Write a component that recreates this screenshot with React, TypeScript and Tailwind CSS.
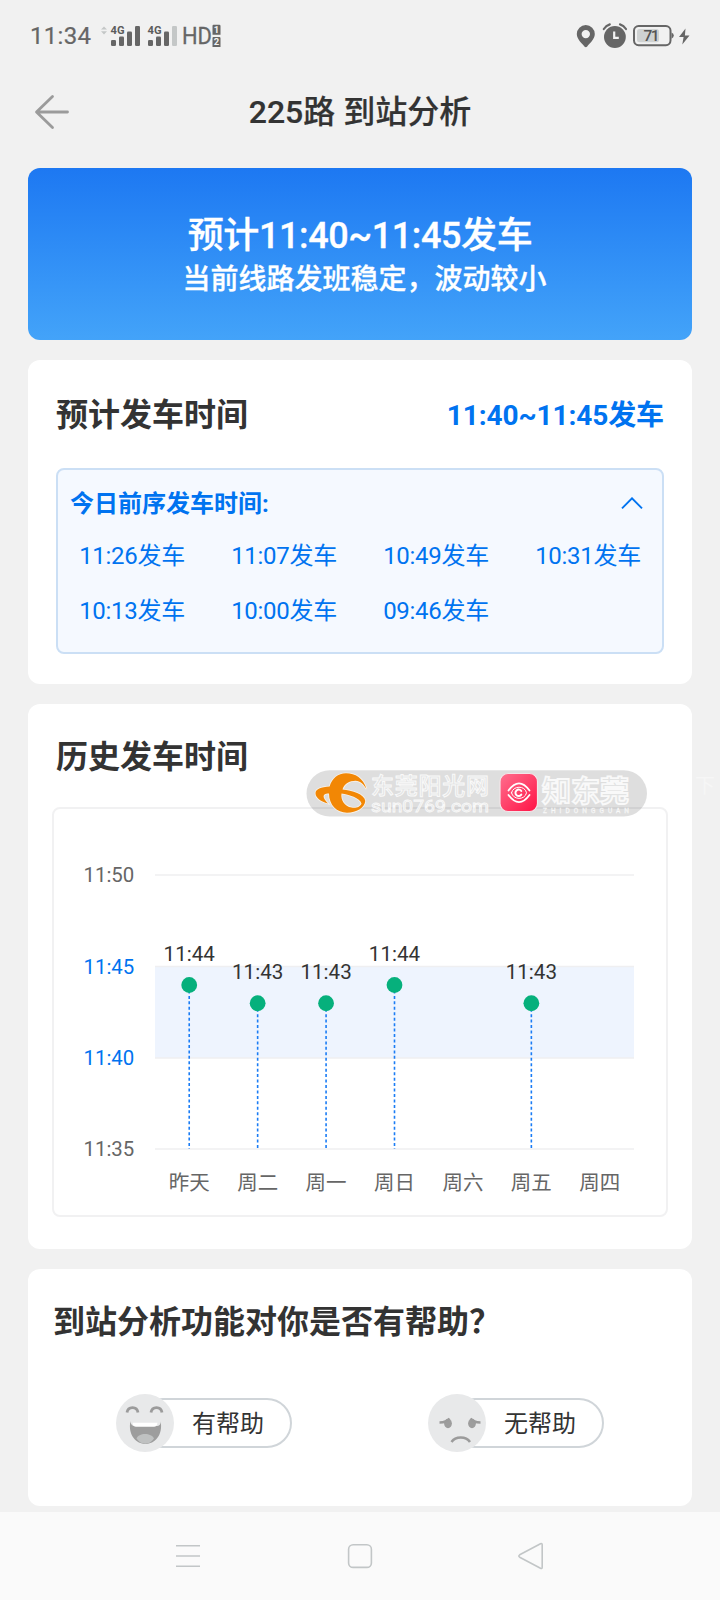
import type { ReactNode } from "react";

const FONT = "font-['Roboto','Noto_Sans_CJK_SC',sans-serif]";

const departures = ["11:26", "11:07", "10:49", "10:31", "10:13", "10:00", "09:46"];

const axis = [
  { label: "11:50", y: 67, active: false },
  { label: "11:45", y: 158.5, active: true },
  { label: "11:40", y: 250, active: true },
  { label: "11:35", y: 341, active: false },
];

const history: { day: string; minute?: number }[] = [
  { day: "昨天", minute: 44 },
  { day: "周二", minute: 43 },
  { day: "周一", minute: 43 },
  { day: "周日", minute: 44 },
  { day: "周六" },
  { day: "周五", minute: 43 },
  { day: "周四" },
];

function SignalBars({ levels }: { levels: number }) {
  const bars = [
    { x: 0, y: 14, h: 6 },
    { x: 8, y: 10.5, h: 9.5 },
    { x: 16, y: 5.5, h: 14.5 },
    { x: 24, y: 0, h: 20 },
  ];
  return (
    <svg className="h-5 w-[29px] overflow-visible" viewBox="0 0 29 20">
      {bars.map((b, i) => (
        <rect key={b.x} x={b.x} y={b.y} width="5" height={b.h} rx="1.3" fill={i < levels ? "#666" : "#c4c7c7"} />
      ))}
      <text x="-0.5" y="8.3" fontSize="11" fontWeight="700" fill="#5c5c5c" textLength="14" lengthAdjust="spacingAndGlyphs">
        4G
      </text>
    </svg>
  );
}

function StatusBar() {
  return (
    <div className="flex h-[72px] items-center justify-between pr-[30px] pl-[30px] text-[#666]">
      <div className="flex h-7 items-center">
        <span className="w-[61px] text-2xl leading-7 tracking-[0.3px] [-webkit-text-stroke:0.2px]">11:34</span>
        <svg className="ml-[10px] h-5 w-[6px]" viewBox="0 0 6 20">
          <path d="M0 3.6 3 .4 6 3.6ZM0 5.2 3 8.4 6 5.2Z" fill="#c4c7c7" />
        </svg>
        <div className="ml-1 flex gap-2">
          <SignalBars levels={4} />
          <SignalBars levels={3} />
        </div>
        <svg className="ml-[5px] h-6 w-[39px] overflow-visible" viewBox="0 0 39 24">
          <text x="0" y="20.2" fontSize="24" fill="#666" stroke="#666" strokeWidth="0.3" textLength="30" lengthAdjust="spacingAndGlyphs">
            HD
          </text>
          <path d="M31.5.8h5.800q1.200 0 1.200 1.200v8.800h-8V2q0-1.200 1-1.200ZM31.500 13h5.800q1.200 0 1.200 1.200V23h-8v-8.800q0-1.200 1-1.200Z" fill="#666" />
          <text x="34.500" y="9.200" fontSize="9.500" fontWeight="700" textAnchor="middle" fill="#f2f2f2">1</text>
          <text x="34.500" y="21.400" fontSize="9.500" fontWeight="700" textAnchor="middle" fill="#f2f2f2">2</text>
        </svg>
      </div>
      <svg className="h-[26px] w-[114px]" viewBox="0 0 114 26" fill="none">
        <path d="M9.800 2a9 9 0 0 0-9 9c0 5.500 5.500 9.500 7.600 12.400q1.400 1.600 2.800 0C13.300 20.500 18.800 16.500 18.800 11a9 9 0 0 0-9-9Zm0 4.900a4.200 4.200 0 1 1 0 8.400 4.200 4.200 0 0 1 0-8.400Z" fill="#666" />
        <circle cx="38.900" cy="14" r="10.900" fill="#666" />
        <path d="M38.200 8.600v6.200h4.600" stroke="#f2f2f2" strokeWidth="2.200" />
        <path d="M27.800 6q2.200-3.400 6-4.600M50 6q-2.200-3.400-6-4.600" stroke="#666" strokeWidth="2.200" strokeLinecap="round" />
        <rect x="58" y="3" width="36.500" height="19.200" rx="4.600" stroke="#666" strokeWidth="2" />
        <path d="M95.500 9.500q2.300 1 2.300 3.100t-2.300 3.100Z" fill="#666" />
        <rect x="61" y="6" width="22" height="13.200" rx="2.500" fill="#cfd2d2" />
        <text x="67.500" y="18" fontSize="15.500" fontWeight="500" fill="#555" textLength="16">71</text>
        <path d="M109.500 5.500 103 14h4.600l-1.300 7.500L113.500 12.500h-4.600Z" fill="#666" />
      </svg>
    </div>
  );
}

function Header() {
  return (
    <header className="flex h-24 items-start px-[34px]">
      <svg className="mt-[22px] h-9 w-9" viewBox="0 0 36 36" fill="none" stroke="#9b9b9b" strokeWidth="2.800" strokeLinecap="round" strokeLinejoin="round">
        <path d="M18.500 2.500 2.500 18l16 15.500M3 18h30.500" />
      </svg>
      <h1 className="mr-9 flex-1 pt-4 text-center text-[32px] leading-[48px] font-medium text-[#333] [-webkit-text-stroke:0.2px]">225路 到站分析</h1>
    </header>
  );
}

function Card({ className, children }: { className: string; children: ReactNode }) {
  return <section className={`rounded-xl bg-white ${className}`}>{children}</section>;
}

function Departures() {
  return (
    <Card className="h-[324px] px-7 pt-8">
      <div className="flex h-12 items-start justify-between">
        <h2 className="-mt-px text-[32px] leading-[48px] font-bold text-[#333]">预计发车时间</h2>
        <span className="text-[28px] leading-[48px] font-bold tracking-[-0.1px] text-[#0073f0]">11:40~11:45发车</span>
      </div>
      <div className="mt-7 h-[186px] rounded-lg border-2 border-[#cbdff5] bg-[#f5f9ff] text-[#0073f0]">
        <div className="flex h-[66px] items-center justify-between pr-[19px] pl-3">
          <h3 className="pt-px text-2xl leading-9 font-bold">今日前序发车时间:</h3>
          <svg className="h-3 w-[22px]" viewBox="0 0 22 12" fill="none" stroke="#0073f0" strokeWidth="1.900">
            <path d="m1 11.300 10-10 10 10" />
          </svg>
        </div>
        <div className="-mx-0.5 grid grid-cols-4">
          {departures.map((t) => (
            <span key={t} className="h-[55px] pt-0.5 text-center text-2xl leading-9 tracking-[-0.3px]">
              {t}发车
            </span>
          ))}
        </div>
      </div>
    </Card>
  );
}

function HistoryChart() {
  const step = 479 / 7;
  return (
    <svg className="h-[406px] w-[612px]" viewBox="1 1 612 406">
      <rect x="102" y="158.500" width="479" height="91.500" fill="#eef4fe" />
      {axis.map((a) => (
        <g key={a.label}>
          <path d={`M102 ${a.y}h479`} stroke="#efeff1" strokeWidth="1.500" />
          <text x="30.500" y={a.y + 7} fontSize="20.400" fill={a.active ? "#0073f0" : "#666"}>
            {a.label}
          </text>
        </g>
      ))}
      {history.map(({ day, minute }, i) => {
        const x = 102 + step * (i + 0.5);
        const y = minute === undefined ? 0 : 250 - (minute - 40) * 18.25;
        return (
          <g key={day}>
            {minute !== undefined && (
              <>
                <path d={`M${x} ${y}V341`} stroke="#1a7cf5" strokeWidth="1.600" strokeDasharray="3 2.450" />
                <circle cx={x} cy={y} r="7.900" fill="#06b07c" />
                <text x={x} y={y - 24} fontSize="20.600" textAnchor="middle" fill="#333">
                  11:{minute}
                </text>
              </>
            )}
            <text x={x} y="382" fontSize="20.500" textAnchor="middle" fill="#666">
              {day}
            </text>
          </g>
        );
      })}
    </svg>
  );
}

function Watermark() {
  return (
    <svg className="absolute top-[66px] left-[278px] h-[47px] w-[342px]" viewBox="0 0 342 47">
      <defs>
        <linearGradient id="pink" x1="0" y1="0" x2="1" y2="1">
          <stop offset="0" stopColor="#ff6f8e" />
          <stop offset="1" stopColor="#ff1245" />
        </linearGradient>
      </defs>
      <rect x="0.500" y="0.300" width="340.500" height="46.200" rx="23.100" fill="#000" fillOpacity="0.130" />
      <path
        fill="#f28705"
        fillRule="evenodd"
        stroke="#f7f2ea"
        strokeWidth="1.600"
        paintOrder="stroke"
        d="M60.500 19C57 8 49.500 3.300 40 3.300 32 3.300 26 8.500 23.600 16.500 15 17 9.500 19 9.500 23.300c0 4.700 5.500 8.400 12.500 10.200-4-4-5.500-7.500-3.500-9 1.500-1 3.500-1.200 4.500-1C23 35 31 42.700 41 42.700 50.500 42.700 58.500 38 59.300 31 58.500 24 46 20.500 36.500 19.500 38 14 43.500 10.700 49.500 10.700c5 .3 8.500 3.800 11 8.300ZM35.500 23.500C43 24.500 54 28 55.500 33.500 54.500 37 49.500 38.500 45.500 37.500 38.500 36.500 34.500 30 35.500 23.500Z"
      />
      <g fill="#e2e3e3" stroke="#f9f9f9" strokeWidth="1">
        <text x="65" y="24" fontSize="23" fontWeight="500" textLength="118">东莞阳光网</text>
        <text x="65" y="41.500" fontSize="17" strokeWidth="0.800" textLength="118" lengthAdjust="spacingAndGlyphs">sun0769.com</text>
        <text x="236" y="31.500" fontSize="29" fontWeight="700" strokeWidth="1.800" textLength="87">知东莞</text>
        <text x="237" y="42.500" fontSize="6.500" strokeWidth="0.400" textLength="86">ZHIDONGGUAN</text>
      </g>
      <rect x="194" y="3.500" width="37.500" height="38" rx="8" fill="url(#pink)" stroke="#f3e6e9" strokeWidth="1.200" />
      <g fill="none" stroke="#fff" strokeWidth="1.800" strokeLinecap="round">
        <path d="M202.500 20.500c7-9.500 14-9.500 21 0M202.500 25c7 9.500 14 9.500 21 0" />
        <path d="M205.500 22.800c1.500-7.500 13.500-7.500 15 0-1.500 7.500-13.500 7.500-15 0Z" strokeWidth="1" />
        <path d="M215.300 21a3.200 3.200 0 1 0 0 3.600" strokeWidth="2" />
      </g>
    </svg>
  );
}

function HappyFace() {
  return (
    <svg className="h-[58px] w-[58px]" viewBox="0 0 58 58" fill="none">
      <circle cx="29" cy="29" r="29" fill="#e8e9ea" />
      <path d="M11 18.500c1-6.500 10-6.500 11 0M35 18.500c1-6.500 10-6.500 11 0" stroke="#9b9b9b" strokeWidth="2.800" />
      <path d="M14.500 27c0 3.500 2 5 4 5h22c3 0 4.500-2 4-5 3 14-6 23-15 23S11.500 41 14.500 27Z" fill="#9d9d9d" />
      <path d="M16.500 28.800h25q-.5 4-3.500 4H20q-3 0-3.500-4Z" fill="#fff" />
      <path d="M20.500 44.500c2-6 15-6 17.500 0-4.500 7-13 7-17.500 0Z" fill="#bfc1c1" />
    </svg>
  );
}

function SadFace() {
  return (
    <svg className="h-[58px] w-[58px]" viewBox="0 0 58 58" fill="none">
      <circle cx="29" cy="29" r="29" fill="#e8e9ea" />
      <ellipse cx="20" cy="29.500" rx="3.900" ry="4.700" fill="#9d9d9d" />
      <ellipse cx="44" cy="29.500" rx="3.900" ry="4.700" fill="#9d9d9d" />
      <path d="M11.500 28.500c5 0 8-1.200 10-4M52.500 28.500c-5 0-8-1.200-10-4" stroke="#9b9b9b" strokeWidth="2.400" />
      <path d="M23.500 48c4-6 14.500-6 18.500 0" stroke="#9b9b9b" strokeWidth="2.500" />
    </svg>
  );
}

function VoteButton({ face, label }: { face: ReactNode; label: string }) {
  return (
    <button className="flex h-[58px] w-[176px] items-center">
      <span className="z-10">{face}</span>
      <span className="-ml-9 h-[50px] flex-1 rounded-full border-2 border-[#d0d5d9] bg-white pl-[52px] text-left text-2xl leading-[49px] text-[#333]">
        {label}
      </span>
    </button>
  );
}

function NavBar() {
  return (
    <nav className="mt-1.5 flex h-[88px] items-start justify-between bg-[#fafafa] pt-[30px] pr-[176px] pl-[174px]">
      <svg className="h-7 w-7" viewBox="0 0 28 28" fill="none" stroke="#c2c6c7" strokeWidth="1.600">
        <path d="M2 3.700h24M2 14h24M2 24.300h24" />
      </svg>
      <svg className="h-7 w-7" viewBox="0 0 28 28" fill="none" stroke="#c2c6c7" strokeWidth="1.600">
        <rect x="3.600" y="2.800" width="22.800" height="22.600" rx="4.500" />
      </svg>
      <svg className="h-7 w-7" viewBox="0 0 28 28" fill="none" stroke="#c2c6c7" strokeWidth="1.600" strokeLinejoin="round">
        <path d="M24.500 1.800q1.700-.8 1.700 1v22.400q0 1.800-1.700 1L3.700 15.200q-1.700-1.200 0-2.400Z" />
      </svg>
    </nav>
  );
}

export default function App() {
  return (
    <div className={`${FONT} flex h-[1600px] w-[720px] flex-col overflow-hidden bg-[#f1f1f1]`}>
      <StatusBar />
      <Header />
      <main className="flex flex-col gap-5 px-7">
        <section className="flex h-[172px] flex-col items-center rounded-xl bg-linear-to-b from-[#1d78f2] to-[#43a3f9] pt-[42px] font-medium text-white [-webkit-text-stroke:0.3px]">
          <p className="text-4xl leading-[53px] tracking-[-0.4px]">预计11:40~11:45发车</p>
          <p className="pl-[9px] text-[28px] leading-[34px]">当前线路发班稳定，波动较小</p>
        </section>
        <Departures />
        <Card className="relative h-[545px] px-6 pt-[29px]">
          <h2 className="pl-1 text-[32px] leading-[48px] font-bold text-[#333]">历史发车时间</h2>
          <div className="mt-[26px] w-[616px] rounded-lg border-2 border-[#f1f1f2]">
            <HistoryChart />
          </div>
          <Watermark />
          <span className="absolute top-[68px] left-[667px] text-[20px] leading-7 text-[#f6f6f6]">下</span>
        </Card>
        <Card className="h-[237px] px-[25px] pt-[29px]">
          <h2 className="text-[32px] leading-[48px] font-bold text-[#333]">到站分析功能对你是否有帮助？</h2>
          <div className="mt-12 flex gap-[136px] pl-[63px]">
            <VoteButton face={<HappyFace />} label="有帮助" />
            <VoteButton face={<SadFace />} label="无帮助" />
          </div>
        </Card>
      </main>
      <NavBar />
    </div>
  );
}
